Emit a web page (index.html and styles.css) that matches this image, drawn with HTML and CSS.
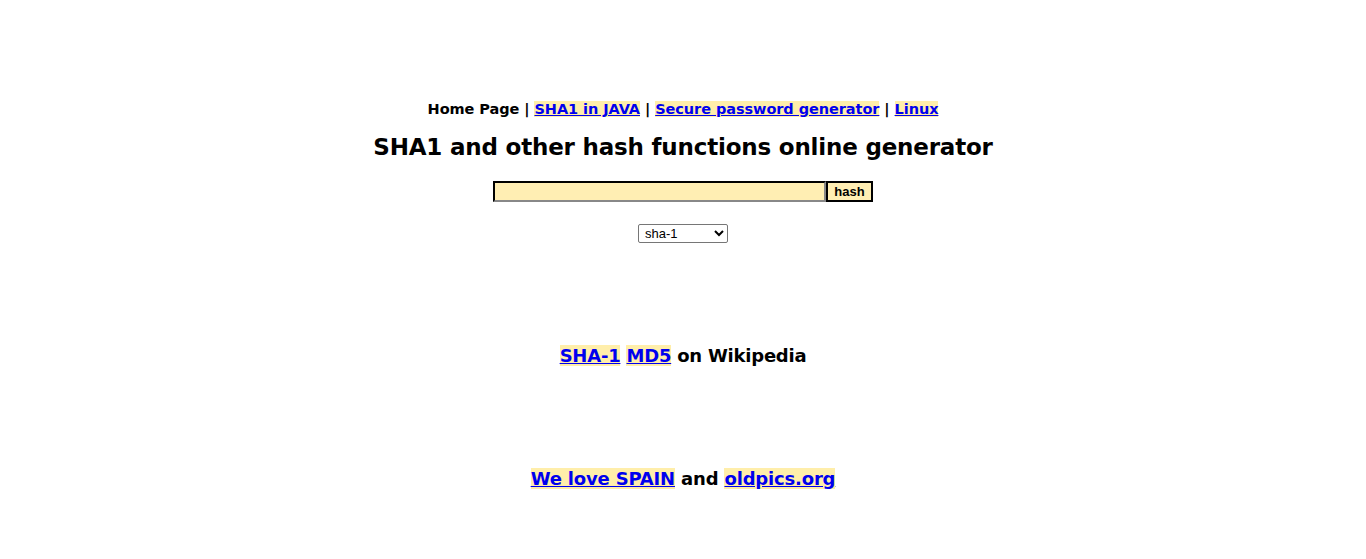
FILE: index.html
```html
<!DOCTYPE html>
<html>
<head>
<meta charset="utf-8">
<link rel="stylesheet" href="styles.css">
</head>
<body>
<div class="page">
  <nav class="nav">Home Page | <a href="#">SHA1 in JAVA</a> | <a href="#">Secure password generator</a> | <a href="#">Linux</a></nav>
  <h1 class="title">SHA1 and other hash functions online generator</h1>
  <form class="form">
    <div class="row"><input class="field" type="text"><button class="btn" type="button">hash</button></div>
    <select class="algo"><option>sha-1</option><option>md5</option></select>
  </form>
  <p class="wiki"><a href="#">SHA-1</a> <a href="#">MD5</a> on Wikipedia</p>
  <p class="love"><a href="#">We love SPAIN</a> and <a href="#">oldpics.org</a></p>
</div>
</body>
</html>
```
FILE: styles.css
```css
html, body { margin: 0; padding: 0; background: #fff; }
body { font-family: "DejaVu Sans", Verdana, sans-serif; color: #000; }
.page { display: flex; flex-direction: column; align-items: center; padding-top: 99px; }
a { color: #0000ee; background: #ffeeaa; }
.nav { font-size: 14.5px; letter-spacing: -0.07px; font-weight: bold; line-height: 20px; }
.title { font-size: 23px; letter-spacing: -0.19px; font-weight: bold; margin: 13px 0 0; line-height: 30px; }
.form { display: flex; flex-direction: column; align-items: center; margin-top: 19px; }
.row { display: flex; }
.field { width: 333px; height: 21px; box-sizing: border-box; background: #ffeeb3; border: 2px inset #333; border-right-color: #888; border-bottom-color: #888; padding: 0; margin: 0; }
.btn { height: 21px; width: 47px; box-sizing: border-box; background: #ffeeb3; border: 2px solid #000; font-family: "Liberation Sans", Arial, sans-serif; font-weight: bold; font-size: 13px; padding: 0; margin: 0; color: #000; }
.algo { margin-top: 22px; width: 90px; height: 19px; font-family: "Liberation Sans", Arial, sans-serif; font-size: 13px; border: 1px solid #767676; border-radius: 2px; background: #fff; padding: 0 2px; }
.wiki { font-size: 18px; letter-spacing: -0.23px; font-weight: bold; margin: 101px 0 0; line-height: 24px; }
.love { font-size: 18px; letter-spacing: -0.18px; font-weight: bold; margin: 99px 0 0; line-height: 24px; }
```
